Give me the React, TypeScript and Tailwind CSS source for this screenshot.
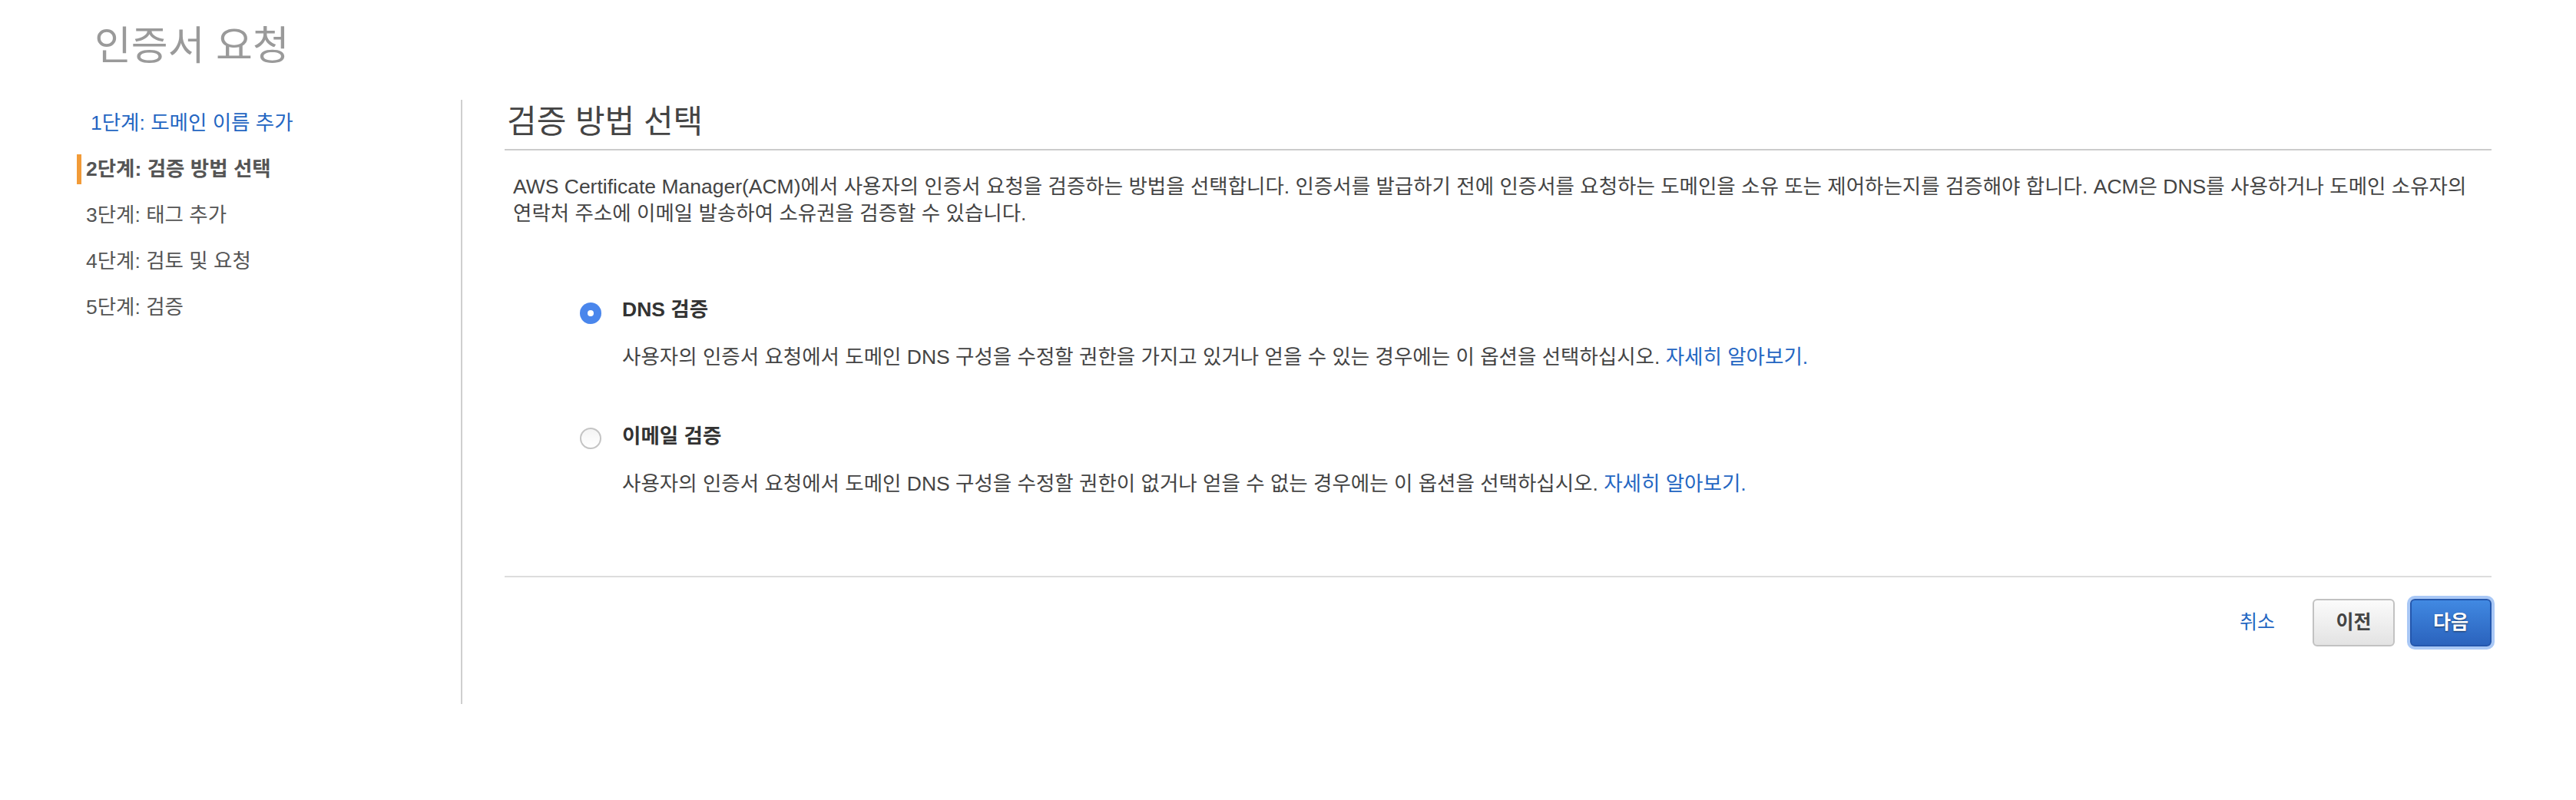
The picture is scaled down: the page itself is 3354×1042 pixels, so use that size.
import React from 'react';

const font = { fontFamily: '"Liberation Sans", "Noto Sans CJK KR", sans-serif' };

const steps = [
  { label: '1단계: 도메인 이름 추가', state: 'done' },
  { label: '2단계: 검증 방법 선택', state: 'current' },
  { label: '3단계: 태그 추가', state: 'todo' },
  { label: '4단계: 검토 및 요청', state: 'todo' },
  { label: '5단계: 검증', state: 'todo' },
];

const Radio: React.FC<{ checked?: boolean }> = ({ checked }) =>
  checked ? (
    <div className="mt-[8px] flex h-[28px] w-[28px] shrink-0 items-center justify-center rounded-full bg-[#4a86ec]">
      <div className="h-[8px] w-[8px] rounded-full bg-white" />
    </div>
  ) : (
    <div className="mt-[6px] h-[28px] w-[28px] shrink-0 rounded-full border-2 border-[#c4c4c4] bg-linear-to-b from-[#f4f4f4] to-white" />
  );

const App: React.FC = () => {
  return (
    <div className="h-[1042px] w-full bg-white break-keep" style={font}>
      {/* Page title */}
      <h1 className="pl-[123px] pt-[31px] text-[52px] leading-[58px] font-normal text-[#9a9a9a]">인증서 요청</h1>

      <div className="mt-[41px] flex h-[787px]">
        {/* Steps */}
        <div className="w-[602px] shrink-0 border-r-2 border-[#cfcfcf]">
          <ul className="pl-[100px]">
            {steps.map((s) => (
              <li key={s.label} className="flex h-[60px] items-center">
                {s.state === 'current' ? (
                  <span className="border-l-[6px] border-[#f29b38] pl-[6px] text-[26.5px] leading-[39px] font-bold text-[#555]">
                    {s.label}
                  </span>
                ) : s.state === 'done' ? (
                  <span className="pl-[18px] text-[26.5px] leading-[39px] text-[#2466c2]">{s.label}</span>
                ) : (
                  <span className="pl-[12px] text-[26.5px] leading-[39px] text-[#555]">{s.label}</span>
                )}
              </li>
            ))}
          </ul>
        </div>

        {/* Main panel */}
        <div className="flex-1 pl-[55px] pr-[110px]">
          <h2 className="border-b-2 border-[#cccccc] pb-[7px] pl-[3px] text-[42px] leading-[57px] font-normal text-[#444]">
            검증 방법 선택
          </h2>
          <p className="mt-[30px] pl-[11px] text-[26.5px] leading-[35px] text-[#444] break-keep">
            AWS Certificate Manager(ACM)에서 사용자의 인증서 요청을 검증하는 방법을 선택합니다. 인증서를 발급하기 전에 인증서를 요청하는
            도메인을 소유 또는 제어하는지를 검증해야 합니다. ACM은 DNS를 사용하거나 도메인 소유자의 연락처 주소에 이메일 발송하여 소유권을
            검증할 수 있습니다.
          </p>

          <div className="mt-[90px] flex gap-[27px] pl-[98px]">
            <Radio checked />
            <div>
              <div className="text-[26.5px] leading-[35px] font-bold text-[#333]">DNS 검증</div>
              <div className="mt-[27px] text-[26.5px] leading-[35px] text-[#444]">
                사용자의 인증서 요청에서 도메인 DNS 구성을 수정할 권한을 가지고 있거나 얻을 수 있는 경우에는 이 옵션을 선택하십시오.{' '}
                <a className="text-[#2466c2]">자세히 알아보기.</a>
              </div>
            </div>
          </div>

          <div className="mt-[68px] flex gap-[27px] pl-[98px]">
            <Radio />
            <div>
              <div className="text-[26.5px] leading-[35px] font-bold text-[#333]">이메일 검증</div>
              <div className="mt-[27px] text-[26.5px] leading-[35px] text-[#444]">
                사용자의 인증서 요청에서 도메인 DNS 구성을 수정할 권한이 없거나 얻을 수 없는 경우에는 이 옵션을 선택하십시오.{' '}
                <a className="text-[#2466c2]">자세히 알아보기.</a>
              </div>
            </div>
          </div>

          <div className="mt-[102px] border-t-2 border-[#dddddd]" />

          {/* Actions */}
          <div className="mt-[28px] flex items-center justify-end">
            <a className="text-[25px] text-[#2466c2]">취소</a>
            <button className="ml-[49px] h-[62px] w-[107px] rounded-[6px] border-2 border-[#c2c2c2] bg-linear-to-b from-[#fbfbfb] to-[#e3e3e3] text-[25px] font-bold text-[#444]">
              이전
            </button>
            <button className="ml-[20px] h-[62px] w-[106px] rounded-[6px] border-2 border-[#2457ad] bg-linear-to-b from-[#4189e2] to-[#2b63bd] text-[25px] font-bold text-white ring-[4px] ring-[#a9c8f6] [text-shadow:0_1px_2px_rgba(0,0,0,0.55)]">
              다음
            </button>
          </div>
        </div>
      </div>
    </div>
  );
};

export default App;
